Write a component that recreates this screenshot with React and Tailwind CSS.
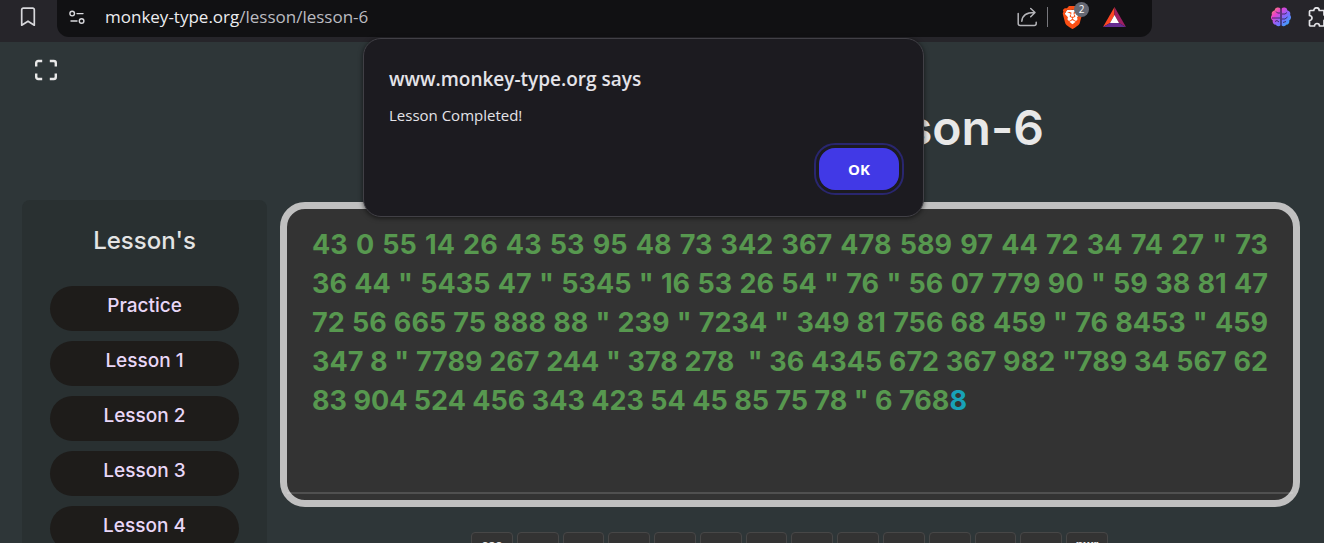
import { SiBrave } from "react-icons/si";

const LINES = [
  '43 0 55 14 26 43 53 95 48 73 342 367 478 589 97 44 72 34 74 27 " 73',
  '36 44 " 5435 47 " 5345 " 16 53 26 54 " 76 " 56 07 779 90 " 59 38 81 47',
  '72 56 665 75 888 88 " 239 " 7234 " 349 81 756 68 459 " 76 8453 " 459',
  '347 8 " 7789 267 244 " 378 278  " 36 4345 672 367 982 "789 34 567 62',
];
const LESSONS = ["Practice", "Lesson 1", "Lesson 2", "Lesson 3", "Lesson 4"];
const KEYS = ["esc", "", "", "", "", "", "", "", "", "", "", "", "", "pwr"];

function Toolbar() {
  return (
    <header className="flex h-[42px] shrink-0 bg-[#26252a] pl-[19px] text-[#d8d8dc]">
      <button aria-label="Bookmark" className="mt-[7px] h-5 w-[18px]">
        <svg viewBox="0 0 18 20" className="h-5 w-[18px]" fill="none" stroke="currentColor" strokeWidth="1.7" strokeLinejoin="round">
          <path d="M4.3 1.2h9.4a1.6 1.6 0 0 1 1.6 1.6v15.4L9 14.2l-6.3 4V2.8a1.6 1.6 0 0 1 1.6-1.6z" />
        </svg>
      </button>
      <div className="ml-5 flex h-[37px] flex-1 items-start rounded-b-xl bg-[#111113] pr-[26px] pl-3">
        <button aria-label="Site information" className="mt-[9px]">
          <svg viewBox="0 0 16 16" className="h-4 w-4" fill="none" stroke="currentColor" strokeWidth="1.4" strokeLinecap="round">
            <circle cx="3.2" cy="4.6" r="2.3" />
            <path d="M8 4.6h6M2 12h6" />
            <circle cx="12.6" cy="12" r="2.3" />
          </svg>
        </button>
        <div className="mt-[6px] ml-5 flex-1 text-[17px] leading-[22px] text-[#bcbcc1]">
          <span className="text-[#ececef]">monkey-type.org</span>/lesson/lesson-6
        </div>
        <button aria-label="Share" className="mt-[7px]">
          <svg viewBox="0 0 20 20" className="h-5 w-5" fill="none" stroke="#b5b5b9" strokeWidth="1.5" strokeLinejoin="round" strokeLinecap="round">
            <path d="M1.2 6.5v10a2 2 0 0 0 2 2h14a2 2 0 0 0 2-2v-1.2M4.8 14.2c.4-5.5 4-8.7 12.7-8.700M13.700 1.500l4.300 4-4.300 4.200" />
          </svg>
        </button>
        <span className="mt-[7px] ml-2.5 h-5 w-px bg-[#77777c]" />
        <button aria-label="Shields" className="relative mt-[6px] ml-[13px] h-6 w-[22px]">
          <svg viewBox="0 0 24 24" className="absolute top-0 left-0 h-[23px] w-[23px]">
            <path fill="#fff" d="M6 4h12l2 4-2.500 10L12 22l-5.500-4L4 8z" />
          </svg>
          <SiBrave className="absolute top-0 left-0 h-[23px] w-[23px] text-[#fb4f14]" />
          <span className="absolute -top-1 left-[13px] flex h-[15px] w-[15px] items-center justify-center rounded-full bg-[#656873] text-[10px] text-white">2</span>
        </button>
        <button aria-label="Rewards" className="mt-[7px] ml-5">
          <svg viewBox="0 0 23 20" className="h-5 w-[23px]">
            <path fill="#ff4724" d="M11.500 0L0 20l7-4 4.500-8z" />
            <path fill="#9e1f63" d="M11.500 0L23 20l-7-4-4.500-8z" />
            <path fill="#662d91" d="M0 20h23l-7-4H7z" />
            <path fill="#fff" d="M11.500 8L16 16H7z" />
          </svg>
        </button>
      </div>
      <div className="ml-[119px] flex w-[53px] items-start gap-4 overflow-hidden pt-[7px]">
        <button aria-label="Brain extension" className="shrink-0">
          <svg viewBox="0 0 20 20" className="h-5 w-5">
            <defs>
              <linearGradient id="brain" x1="0" y1="0" x2="1" y2="1">
                <stop offset="0" stopColor="#ff9a4a" />
                <stop offset=".3" stopColor="#e83fd0" />
                <stop offset=".6" stopColor="#7b6cff" />
                <stop offset="1" stopColor="#20b7f5" />
              </linearGradient>
            </defs>
            <path fill="url(#brain)" d="M9.600 1.800v16.400a3 3 0 0 1-4.800-.4 3.300 3.300 0 0 1-3-4.200A3.700 3.700 0 0 1 .9 8a3.500 3.500 0 0 1 2.600-4.600 3.400 3.400 0 0 1 6.100-1.600zM10.400 1.800v16.400a3 3 0 0 0 4.800-.4 3.300 3.300 0 0 0 3-4.200A3.700 3.700 0 0 0 19.100 8a3.500 3.500 0 0 0-2.600-4.600 3.400 3.400 0 0 0-6.100-1.600z" />
            <path fill="none" stroke="#37265b" strokeWidth=".9" d="M10 1v18M9 6H6.500L5 4.500M9 11H1M8 15l-2-1.500-2 1M11 7h3l2-1.500M11 12h3l2.500-2M12 15.500l3-1" />
          </svg>
        </button>
        <button aria-label="Extensions" className="shrink-0">
          <svg viewBox="0 0 22 20" className="h-5 w-[22px]" fill="none" stroke="#e4e4e8" strokeWidth="1.700" strokeLinejoin="round">
            <path d="M3.500 3.500h3.300a2.700 2.700 0 0 1 5.400 0H16a1 1 0 0 1 1 1V8a2.700 2.700 0 0 1 0 5.400V18a1 1 0 0 1-1 1h-3.500a2.500 2.500 0 0 0-5 0h-4a1 1 0 0 1-1-1v-4.500a2.500 2.500 0 0 0 0-5v-4a1 1 0 0 1 1-1z" />
          </svg>
        </button>
      </div>
    </header>
  );
}

function Dialog() {
  return (
    <div role="dialog" aria-labelledby="dialog-title" className="absolute top-[38px] left-[363px] flex w-[561px] flex-col rounded-[18px] border border-[#414046] bg-[#1c1b20] px-[25px] pt-[26px] pb-[26px] text-[#e4e3e8] shadow-[0_1px_5px_rgba(0,0,0,0.6)]">
      <h2 id="dialog-title" className="text-[19px] leading-7 font-semibold">www.monkey-type.org says</h2>
      <p className="mt-3 text-[15px] leading-5">Lesson Completed!</p>
      <button className="mt-[23px] -mr-px h-[42px] w-20 self-end rounded-2xl bg-[#4139e6] text-[15px] font-bold text-white outline-2 outline-offset-[3px] outline-[#29266f]">OK</button>
    </div>
  );
}

export default function App() {
  return (
    <div className="relative flex h-screen flex-col overflow-hidden bg-[#2e3638] font-['Open_Sans','Noto_Sans',sans-serif]">
      <Toolbar />
      <main className="flex flex-1 flex-col font-['Inter',sans-serif]">
        <div className="flex h-[158px] shrink-0 items-start pl-[34px]">
          <button aria-label="Full screen" className="mt-[17px]">
            <svg viewBox="0 0 24 22" className="h-[22px] w-6" fill="none" stroke="#e8e8e8" strokeWidth="2.400" strokeLinejoin="round">
              <path d="M2.200 7.500V4a2 2 0 0 1 2-2h4M15.800 2h4a2 2 0 0 1 2 2v3.500M21.800 14.500V18a2 2 0 0 1-2 2h-4M8.200 20h-4a2 2 0 0 1-2-2v-3.500" />
            </svg>
          </button>
          <h1 className="mt-14 flex-1 pr-[280px] text-right text-5xl leading-[60px] font-semibold text-[#e8e8e8]">Lesson-6</h1>
        </div>
        <div className="flex items-start pr-6 pl-[22px]">
          <nav className="flex w-[245px] shrink-0 flex-col rounded-t-lg bg-[#293031] px-7 pt-6">
            <h2 className="mb-7 text-center text-2xl leading-[34px] font-medium text-[#e4e4e4]">Lesson's</h2>
            <ul className="flex flex-col gap-2.5">
              {LESSONS.map((l) => (
                <li key={l}>
                  <a href="#" className="flex h-[45px] items-center justify-center rounded-full bg-[#1e1c1a] pb-1 text-[19px] font-medium text-[#e9d7f8]">{l}</a>
                </li>
              ))}
            </ul>
          </nav>
          <div className="mt-0.5 ml-[13px] flex flex-1 flex-col">
            <section className="flex h-[305px] flex-col justify-between rounded-[25px] border-[7px] border-[#c0c0c0] bg-[#333333]">
              <div className="px-[25px] pt-4 text-[27px] leading-[39px] font-bold whitespace-pre text-[#57984f]">
                {LINES.map((l) => (
                  <p key={l} className="[text-align-last:justify] whitespace-pre-wrap">{l}</p>
                ))}
                <p>83 904 524 456 343 423 54 45 85 75 78 " 6 768<span className="text-[#18a2b8]">8</span></p>
              </div>
              <div className="mb-1.5 h-0.5 bg-white/14" />
            </section>
            <div className="mt-[25px] mr-[192px] ml-[191px] flex gap-1">
              {KEYS.map((k, i) => (
                <div key={i} className="h-[42px] flex-1 rounded-t border border-[#474747] bg-[#333333] pt-1 text-center text-xs leading-4 font-bold text-[#e0e0e0]">{k}</div>
              ))}
            </div>
          </div>
        </div>
      </main>
      <Dialog />
    </div>
  );
}
